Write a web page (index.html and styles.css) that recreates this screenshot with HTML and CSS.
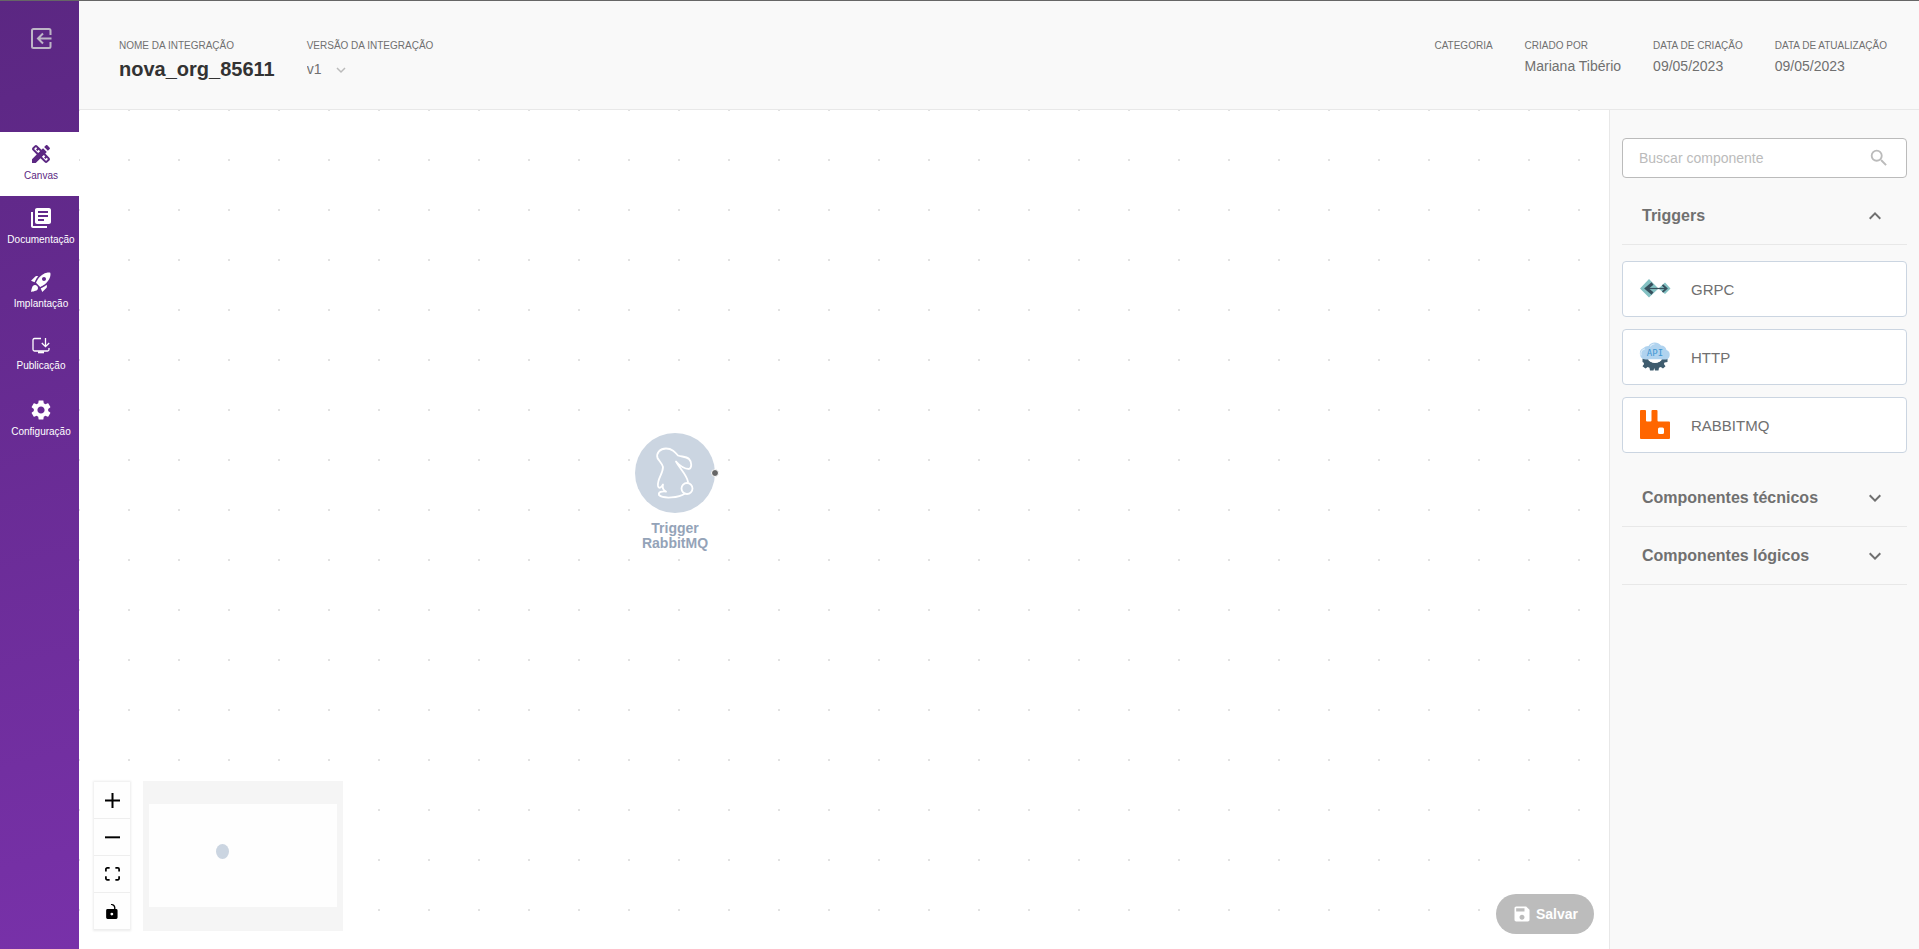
FILE: index.html
```html
<!DOCTYPE html>
<html lang="pt-br">
<head>
    <meta charset="UTF-8">
    <meta name="viewport" content="width=device-width, initial-scale=1.0">
    <title>nova_org_85611</title>
    <link rel="stylesheet" href="styles.css">
</head>
<body>

    <nav class="sidebar">
        <button type="button" class="back" aria-label="Voltar">
            <svg width="24" height="24" viewBox="0 0 24 24" fill="none" stroke="currentColor" stroke-width="2"><path d="M21.500 9V4.500Q21.500 3 20 3H4.500Q3 3 3 4.500v16Q3 22 4.500 22H20q1.500 0 1.500-1.500V16M22.500 12.500H9M14 7.500l-5 5 5 5"/></svg>
        </button>
        <a href="#" class="nav-item active">
            <svg width="24" height="24" viewBox="0 0 24 24"><path fill-rule="evenodd" d="M16.240 11.510l1.570-1.570-3.750-3.750-1.570 1.570-4.140-4.130c-.78-.78-2.050-.78-2.830 0l-1.900 1.900c-.78.78-.78 2.050 0 2.830l4.130 4.130L3 17.250V21h3.750l4.760-4.760 4.130 4.130c.95.95 2.230.6 2.830 0l1.900-1.900c.78-.78.78-2.050 0-2.830l-4.130-4.130zM9.180 11.070L5.040 6.940l1.890-1.900L8.200 6.310 7.020 7.500l1.410 1.410 1.190-1.190 1.450 1.450-1.890 1.900zM17.060 18.950l-4.130-4.130 1.900-1.900 1.450 1.450-1.190 1.190 1.410 1.410 1.190-1.190 1.270 1.270-1.900 1.900zM20.710 7.040c.39-.39.39-1.020 0-1.410l-2.340-2.340c-.47-.47-1.120-.29-1.410 0l-1.830 1.830 3.750 3.750 1.830-1.830z"/></svg>
            <span>Canvas</span>
        </a>
        <a href="#" class="nav-item">
            <svg width="24" height="24" viewBox="0 0 24 24"><path d="M4 6H2v14c0 1.100.9 2 2 2h14v-2H4V6zm16-4H8c-1.100 0-2 .9-2 2v12c0 1.100.9 2 2 2h12c1.100 0 2-.9 2-2V4c0-1.100-.9-2-2-2zm-1 9H9V9h10v2zm-4 4H9v-2h6v2zm4-8H9V5h10v2z"/></svg>
            <span>Documentação</span>
        </a>
        <a href="#" class="nav-item">
            <svg width="24" height="24" viewBox="0 0 24 24"><path fill-rule="evenodd" d="M9.190 6.350c-2.040 2.290-3.440 5.580-3.570 5.890L2 10.690l4.050-4.050c.47-.47 1.150-.68 1.810-.55l1.330.26zM11.170 17s3.740-1.550 5.890-3.700c5.400-5.400 4.500-9.620 4.210-10.570-.95-.3-5.170-1.190-10.570 4.210C8.550 9.090 7 12.830 7 12.830L11.170 17zm6.480-2.190c-2.290 2.040-5.580 3.440-5.890 3.570L13.310 22l4.050-4.050c.47-.47.68-1.150.55-1.810l-.26-1.330zM9 18c0 .83-.34 1.580-.88 2.120C6.940 21.300 2 22 2 22s.7-4.940 1.880-6.120C4.420 15.340 5.170 15 6 15c1.660 0 3 1.340 3 3zm4-9c0-1.100.9-2 2-2s2 .9 2 2-.9 2-2 2-2-.9-2-2z"/></svg>
            <span>Implantação</span>
        </a>
        <a href="#" class="nav-item publish">
            <svg width="20" height="20" viewBox="0 0 20 20" fill="none" stroke="currentColor" stroke-width="1.300"><path d="M10 2.500H3.500Q2 2.500 2 4v9.500Q2 15 3.500 15h13q1.500 0 1.500-1.500V12M14.500 2v8.500M10.800 7l3.700 3.700L18.200 7"/><path d="M7 16.300h6" stroke-width="2"/></svg>
            <span>Publicação</span>
        </a>
        <a href="#" class="nav-item">
            <svg width="24" height="24" viewBox="0 0 24 24"><path d="M19.140 12.940c.04-.3.06-.61.06-.94 0-.32-.02-.64-.07-.94l2.030-1.580c.18-.14.23-.41.12-.61l-1.920-3.320c-.12-.22-.37-.29-.59-.22l-2.390.96c-.5-.38-1.030-.7-1.620-.94l-.36-2.540c-.04-.24-.24-.41-.48-.41h-3.840c-.24 0-.43.17-.47.41l-.36 2.540c-.59.24-1.130.57-1.620.94l-2.390-.96c-.22-.08-.47 0-.59.22L2.740 8.870c-.12.21-.08.47.12.61l2.030 1.580c-.05.3-.09.63-.09.94s.02.64.07.94l-2.030 1.580c-.18.14-.23.41-.12.61l1.920 3.320c.12.22.37.29.59.22l2.390-.96c.5.38 1.030.7 1.620.94l.36 2.540c.05.24.24.41.48.41h3.840c.24 0 .44-.17.47-.41l.36-2.540c.59-.24 1.130-.56 1.620-.94l2.390.96c.22.08.47 0 .59-.22l1.920-3.320c.12-.22.07-.47-.12-.61l-2.010-1.580zM12 15.600c-1.980 0-3.600-1.620-3.600-3.600s1.620-3.600 3.600-3.600 3.600 1.620 3.600 3.600-1.620 3.600-3.600 3.600z"/></svg>
            <span>Configuração</span>
        </a>
    </nav>

    <div class="page">
        <header class="header">
            <div class="field">
                <span class="field-label">NOME DA INTEGRAÇÃO</span>
                <h1>nova_org_85611</h1>
            </div>
            <div class="field">
                <label class="field-label" for="version">VERSÃO DA INTEGRAÇÃO</label>
                <div class="version">
                    <select id="version" name="version">
                        <option>v1</option>
                    </select>
                    <svg width="10" height="10" viewBox="0 0 10 10" fill="none" stroke="currentColor" stroke-width="1.500"><path d="M1 3l4 4 4-4"/></svg>
                </div>
            </div>
            <div class="details">
                <div class="field">
                    <span class="field-label">CATEGORIA</span>
                </div>
                <div class="field">
                    <span class="field-label">CRIADO POR</span>
                    <span class="field-value">Mariana Tibério</span>
                </div>
                <div class="field">
                    <span class="field-label">DATA DE CRIAÇÃO</span>
                    <span class="field-value">09/05/2023</span>
                </div>
                <div class="field">
                    <span class="field-label">DATA DE ATUALIZAÇÃO</span>
                    <span class="field-value">09/05/2023</span>
                </div>
            </div>
        </header>

        <div class="workspace">
            <main class="canvas">
                <div class="node">
                    <div class="node-circle">
                        <svg width="80" height="80" viewBox="0 0 80 80" fill="none" stroke="#fff" stroke-width="1.800" stroke-linejoin="round" stroke-linecap="round">
                            <path d="M53 49C52 42 45 36 41 28.500C45 33 50 36 54 36C57 35 57 29 54 26C51 23 46 24 43 22.500C40 19 37 15.500 31 15.500C25 15.500 21 20 22.500 25C24 28 27 30 28 34C28 41 22 46 23 53C24 56 26 55 28 51.500C27 55 28 57 31 58.500C27 58 23 59 24 62C28 66 44 65 50 60.500"/>
                            <circle cx="52" cy="55.500" r="5.500"/>
                        </svg>
                        <span class="handle"></span>
                    </div>
                    <div class="node-label">Trigger RabbitMQ</div>
                </div>

                <div class="tools">
                    <div class="controls">
                        <button type="button" aria-label="Aumentar zoom">
                            <svg width="15" height="15" viewBox="0 0 32 32"><path d="M32 18.133H18.133V32h-4.266V18.133H0v-4.266h13.867V0h4.266v13.867H32z"/></svg>
                        </button>
                        <button type="button" aria-label="Diminuir zoom">
                            <svg width="15" height="3" viewBox="0 0 32 5"><path d="M0 0h32v4.200H0z"/></svg>
                        </button>
                        <button type="button" aria-label="Ajustar à tela">
                            <svg width="15" height="14" viewBox="0 0 32 30"><path d="M3.692 4.630c0-.53.4-.938.939-.938h5.215V0H4.708C2.130 0 0 2.054 0 4.630v5.216h3.692V4.631zM27.354 0h-5.200v3.692h5.170c.53 0 .984.4.984.939v5.215H32V4.631A4.624 4.624 0 0027.354 0zm.954 24.830c0 .532-.4.94-.939.94h-5.215v3.768h5.215c2.577 0 4.631-2.130 4.631-4.707v-5.139h-3.692v5.139zm-23.677.94c-.531 0-.939-.4-.939-.94v-5.138H0v5.139c0 2.577 2.130 4.707 4.708 4.707h5.138V25.770H4.631z"/></svg>
                        </button>
                        <button type="button" aria-label="Bloquear">
                            <svg width="12" height="15" viewBox="0 0 25 32"><path d="M21.333 10.667H19.810V7.619C19.810 3.429 16.380 0 12.190 0c-4.114 1.828-1.370 2.133.305 2.438 1.676.305 4.420 2.590 4.420 5.181v3.048H3.047A3.056 3.056 0 000 13.714v15.238A3.056 3.056 0 003.048 32h18.285a3.056 3.056 0 003.048-3.048V13.714a3.056 3.056 0 00-3.048-3.047zM12.190 24.533a3.056 3.056 0 01-3.047-3.047 3.056 3.056 0 013.047-3.048 3.056 3.056 0 013.048 3.048 3.056 3.056 0 01-3.048 3.047z"/></svg>
                        </button>
                    </div>
                    <svg class="minimap" width="200" height="150" viewBox="0 0 200 150">
                        <rect width="200" height="150" fill="#f5f5f5"/>
                        <rect x="6" y="23" width="188" height="103" fill="#fefefe"/>
                        <ellipse cx="79.500" cy="70.500" rx="6.500" ry="7.500" fill="#cbd5e1"/>
                    </svg>
                </div>

                <button type="button" class="save">
                    <svg width="20" height="20" viewBox="0 0 24 24"><path d="M17 3H5c-1.110 0-2 .9-2 2v14c0 1.100.89 2 2 2h14c1.100 0 2-.9 2-2V7l-4-4zm-5 16c-1.660 0-3-1.340-3-3s1.340-3 3-3 3 1.340 3 3-1.340 3-3 3zm3-10H5V5h10v4z"/></svg>
                    Salvar
                </button>
            </main>

            <aside class="panel">
                <div class="search">
                    <input type="text" placeholder="Buscar componente" aria-label="Buscar componente">
                    <svg width="22" height="22" viewBox="0 0 24 24"><path d="M15.500 14h-.79l-.28-.27A6.471 6.471 0 0 0 16 9.500 6.500 6.500 0 1 0 9.500 16c1.610 0 3.090-.59 4.230-1.570l.27.28v.79l5 4.990L20.490 19l-4.990-5zm-6 0C7.010 14 5 11.990 5 9.500S7.010 5 9.500 5 14 7.010 14 9.500 11.990 14 9.500 14z"/></svg>
                </div>

                <button type="button" class="group" aria-expanded="true">
                    Triggers
                    <svg width="24" height="24" viewBox="0 0 24 24"><path d="M12 8l-6 6 1.410 1.410L12 10.830l4.590 4.580L18 14z"/></svg>
                </button>
                <div class="components">
                    <button type="button" class="component">
                        <svg width="32" height="32" viewBox="0 0 32 32">
                            <path d="M1 15.500L10 6l9.500 9.500L10 24.500zM19.500 15.500L26 9.500l5.500 6-5.500 5.500z" fill="#84c1c3"/>
                            <path d="M13.500 10.500l-6 5 6 5" fill="none" stroke="#37505d" stroke-width="3"/>
                            <path d="M8 15.500h19" fill="none" stroke="#37505d" stroke-width="1.200"/>
                            <path d="M23.500 12l4 3.500-4 3.500" fill="none" stroke="#37505d" stroke-width="1.800"/>
                        </svg>
                        GRPC
                    </button>
                    <button type="button" class="component">
                        <svg width="32" height="32" viewBox="0 0 32 32">
                            <path d="M3.500 17.500h5.500a7.500 7 0 0 0 14 0h5.500v3.500l-3 .5-.6 1.500 1.600 2.200-2.500 2.300-2.200-1.500-1.800.8-.5 2.700h-3.500l-.7-2.500-.8 2.500h-3.500l-.5-2.700-1.800-.8-2.200 1.500L3.500 25.200l1.600-2.200-.6-1.500-1-.5z" fill="#3f5c6e"/>
                            <path d="M6.500 18.500A6 6 0 0 1 4.500 7 6.500 6.500 0 0 1 9.500 5 7.500 7.500 0 0 1 22 4.500 6 6 0 0 1 27.500 9 5 5 0 0 1 27 18.500z" fill="#b0d3ef"/>
                            <path d="M2 14A5 5 0 0 1 5.500 8M11.500 5A5 5 0 0 1 15 3" fill="none" stroke="#dfeefa" stroke-width="1.200" stroke-linecap="round"/>
                            <path d="M9 18.500a7.300 4 0 0 0 14 0z" fill="#fff"/>
                            <text x="16" y="15" text-anchor="middle" class="api-text">API</text>
                        </svg>
                        HTTP
                    </button>
                    <button type="button" class="component">
                        <svg width="32" height="32" viewBox="0 0 32 32"><path fill-rule="evenodd" fill="#f60" d="M2 1h4q1 0 1 1v9.500q0 1 1 1h3.500q1 0 1-1V2q0-1 1-1h4q1 0 1 1v9.500q0 1 1 1H30q1 0 1 1V29q0 1-1 1H2q-1 0-1-1V2q0-1 1-1zm18.500 17.500a1.500 1.500 0 0 0-1.500 1.500v3.500a1.500 1.500 0 0 0 1.500 1.500h3a1.500 1.500 0 0 0 1.500-1.500V20a1.500 1.500 0 0 0-1.500-1.500z"/></svg>
                        RABBITMQ
                    </button>
                </div>

                <button type="button" class="group" aria-expanded="false">
                    Componentes técnicos
                    <svg width="24" height="24" viewBox="0 0 24 24"><path d="M16.590 8.590L12 13.170 7.410 8.590 6 10l6 6 6-6z"/></svg>
                </button>
                <button type="button" class="group" aria-expanded="false">
                    Componentes lógicos
                    <svg width="24" height="24" viewBox="0 0 24 24"><path d="M16.590 8.590L12 13.170 7.410 8.590 6 10l6 6 6-6z"/></svg>
                </button>
            </aside>
        </div>
    </div>

</body>
</html>
```
FILE: styles.css
```css
* {
    box-sizing: border-box;
}
body {
    margin: 0;
    min-height: 100vh;
    display: flex;
    border-top: 1px solid #666;
    font-family: "Liberation Sans", Arial, sans-serif;
    font-size: 14px;
    color: #707070;
    background-color: #fff;
}
button, input, select {
    font: inherit;
    color: inherit;
}
button {
    padding: 0;
    border: none;
    background: none;
    cursor: pointer;
}
svg {
    flex: none;
    fill: currentColor;
}
svg[fill="none"] {
    fill: none;
}

/* Menu lateral */
.sidebar {
    width: 79px;
    flex: none;
    display: flex;
    flex-direction: column;
    background: linear-gradient(165deg, #5b2782 0%, #7831a9 100%);
}
.back {
    height: 131px;
    padding: 25px 0 0 3px;
    display: flex;
    justify-content: center;
    color: #bdb5c6;
}
.nav-item {
    height: 64px;
    padding: 10px 0 0 3px;
    display: flex;
    flex-direction: column;
    align-items: center;
    gap: 4px;
    color: #fff;
    font-size: 10px;
    line-height: 12px;
    text-decoration: none;
}
.nav-item.active {
    background-color: #fff;
    color: #5b2782;
}
.nav-item.publish {
    padding-top: 12px;
}

/* Cabeçalho */
.page {
    flex: 1;
    min-width: 0;
    display: flex;
    flex-direction: column;
}
.header {
    height: 109px;
    padding: 39px 32px 0 40px;
    display: flex;
    gap: 32px;
    background-color: #f9f9f9;
    border-bottom: 1px solid #e8e8e8;
}
.field {
    display: flex;
    flex-direction: column;
    gap: 5px;
    white-space: nowrap;
}
.field-label {
    font-size: 10px;
    line-height: 12px;
}
.field-value {
    line-height: 18px;
}
.header h1 {
    margin: 0;
    font-size: 20px;
    line-height: 24px;
    color: #333;
}
.version {
    position: relative;
    width: 40px;
}
.version select {
    width: 100%;
    height: 24px;
    padding: 0;
    border: none;
    background: none;
    appearance: none;
}
.version svg {
    position: absolute;
    top: 8px;
    right: 1px;
    color: #bbb;
    pointer-events: none;
}
.details {
    margin-left: auto;
    display: flex;
    gap: 32px;
}

/* Canvas */
.workspace {
    flex: 1;
    display: flex;
}
.canvas {
    flex: 1;
    position: relative;
    overflow: hidden;
    background-image: radial-gradient(circle, #e2e2e2 1px, transparent 1px);
    background-size: 50px 50px;
    background-position: -25px -25px;
}
.node {
    position: absolute;
    left: 556px;
    top: 323px;
    width: 80px;
}
.node-circle {
    position: relative;
    height: 80px;
    border-radius: 50%;
    background-color: #cbd5e1;
}
.handle {
    position: absolute;
    top: 36px;
    right: -4px;
    width: 8px;
    height: 8px;
    border: 1px solid #fff;
    border-radius: 50%;
    background-color: #666;
}
.node-label {
    margin-top: 8px;
    color: #94a3b8;
    font-weight: bold;
    line-height: 15px;
    text-align: center;
}
.tools {
    position: absolute;
    left: 15px;
    bottom: 18px;
    display: flex;
    gap: 13px;
}
.controls {
    width: 36px;
    margin: 1px 0;
    box-shadow: 0 0 2px 1px rgba(0, 0, 0, 0.08);
}
.controls button {
    width: 36px;
    height: 37px;
    display: flex;
    align-items: center;
    justify-content: center;
    background-color: #fefefe;
    border-bottom: 1px solid #eee;
    color: #000;
}
.save {
    position: absolute;
    right: 15px;
    bottom: 15px;
    height: 40px;
    padding: 0 16px;
    display: flex;
    align-items: center;
    gap: 4px;
    border-radius: 20px;
    background-color: #bcbcbc;
    color: #fff;
    font-weight: bold;
}

/* Painel de componentes */
.panel {
    width: 310px;
    flex: none;
    padding: 28px 12px;
    background-color: #f9f9f9;
    border-left: 1px solid #e8e8e8;
}
.search {
    height: 40px;
    margin-bottom: 9px;
    padding: 0 16px;
    display: flex;
    align-items: center;
    border: 1px solid #bbb;
    border-radius: 4px;
    background-color: #fff;
    color: #bbb;
}
.search input {
    flex: 1;
    min-width: 0;
    padding: 0;
    border: none;
    outline: none;
    background: none;
    color: #707070;
}
.search input::placeholder {
    color: #bbb;
}
.group {
    width: 100%;
    height: 58px;
    padding: 0 20px;
    display: flex;
    align-items: center;
    justify-content: space-between;
    border-bottom: 1px solid #e8e8e8;
    font-size: 16px;
    font-weight: bold;
}
.components {
    padding: 16px 0;
    display: flex;
    flex-direction: column;
    gap: 12px;
}
.component {
    height: 56px;
    padding: 0 16px;
    display: flex;
    align-items: center;
    gap: 20px;
    border: 1px solid #cbd5e1;
    border-radius: 4px;
    background-color: #fff;
    font-size: 15px;
}
.api-text {
    font-family: "DejaVu Sans Mono", monospace;
    font-size: 9px;
    fill: #3f97d3;
}
```
